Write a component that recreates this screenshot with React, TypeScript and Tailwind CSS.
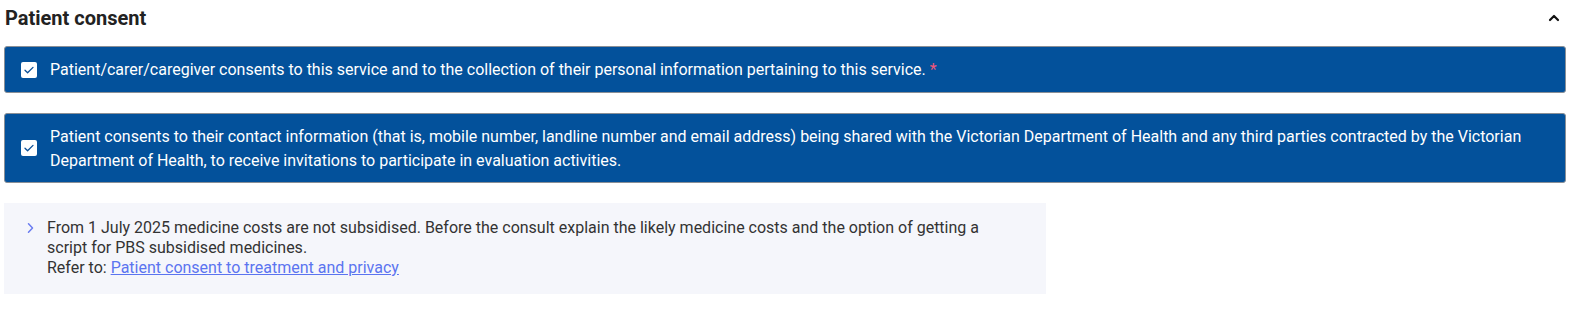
import React, { useState } from 'react';

const CheckBox = ({ checked, onChange }: { checked: boolean; onChange: () => void }) => (
  <button
    onClick={onChange}
    className="w-[16px] h-[16px] bg-white rounded-[2px] flex items-center justify-center shrink-0"
  >
    {checked && (
      <svg width="12" height="12" viewBox="0 0 12 12" fill="none">
        <path d="M2 6.3l2.6 2.5L10 3.4" stroke="#0a4f97" strokeWidth="1.3" strokeLinecap="round" strokeLinejoin="round" />
      </svg>
    )}
  </button>
);

const App: React.FC = () => {
  const [open, setOpen] = useState(true);
  const [serviceConsent, setServiceConsent] = useState(true);
  const [contactConsent, setContactConsent] = useState(true);

  return (
    <div className="w-[1572px] h-[315px] bg-white font-['Roboto',sans-serif] text-[#1f1f1f]">
      <div className="pl-[4px] pr-[6px] pt-[4px]">
        {/* Header */}
        <div className="flex items-center justify-between h-[28px]">
          <h2 className="text-[20px] font-bold text-[#222] pl-[1px]">Patient consent</h2>
          <button onClick={() => setOpen(!open)} className="pr-[5px]">
            <svg width="14" height="14" viewBox="0 0 14 14" fill="none">
              <path d="M3 9l4-4 4 4" stroke="#111" strokeWidth="2.2" strokeLinecap="round" strokeLinejoin="round" />
            </svg>
          </button>
        </div>

        {open && (
          <div className="mt-[14px]">
            <div className="bg-[#03519b] border border-[#8a8f96] rounded-[3px] h-[47px] flex items-center pl-[16px] gap-[13px] text-white text-[16px]">
              <CheckBox checked={serviceConsent} onChange={() => setServiceConsent(!serviceConsent)} />
              <p>
                Patient/carer/caregiver consents to this service and to the collection of their personal information pertaining to this service.{' '}
                <span className="text-[#f0567a]">*</span>
              </p>
            </div>

            <div className="mt-[20px] bg-[#03519b] border border-[#8a8f96] rounded-[3px] h-[70px] flex items-center pl-[16px] pr-[20px] gap-[13px] text-white text-[16px] leading-[24px]">
              <CheckBox checked={contactConsent} onChange={() => setContactConsent(!contactConsent)} />
              <p className="pt-[1px]">
                Patient consents to their contact information (that is, mobile number, landline number and email address) being shared with the Victorian Department of Health and any third parties contracted by the Victorian Department of Health, to receive invitations to participate in evaluation activities.
              </p>
            </div>

            <div className="mt-[20px] w-[1042px] bg-[#f5f6fb] pt-[15px] pb-[16px] pl-[20px] pr-[40px] flex gap-[11px] text-[16px] leading-[20px] text-[#333]">
              <svg width="12" height="12" viewBox="0 0 12 12" fill="none" className="mt-[4px] shrink-0">
                <path d="M4.5 1.8L8.5 6l-4 4.2" stroke="#6a7cf0" strokeWidth="1.5" strokeLinecap="round" strokeLinejoin="round" />
              </svg>
              <div>
                <p>
                  From 1 July 2025 medicine costs are not subsidised. Before the consult explain the likely medicine costs and the option of getting a script for PBS subsidised medicines.
                </p>
                <p>
                  Refer to:{' '}
                  <a href="#" className="text-[#5b74f0] underline">
                    Patient consent to treatment and privacy
                  </a>
                </p>
              </div>
            </div>
          </div>
        )}
      </div>
    </div>
  );
};

export default App;
